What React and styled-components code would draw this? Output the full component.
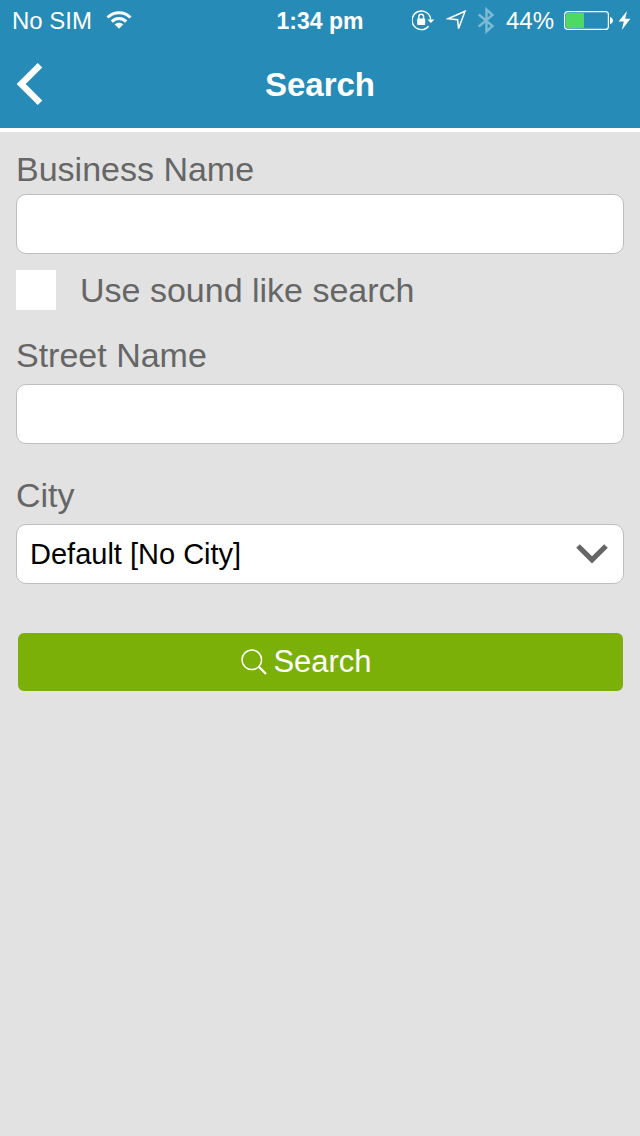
import React, { useState } from 'react';
import styled, { createGlobalStyle } from 'styled-components';

const GlobalStyle = createGlobalStyle`
  * {
    box-sizing: border-box;
  }

  body {
    margin: 0;
    background-color: #e2e2e2;
    font-family: 'Liberation Sans', Arial, sans-serif;
  }
`;

const Header = styled.header`
  background-color: #268cb7;
  color: #fff;
  border-bottom: 4px solid #fff;
`;

const StatusBar = styled.div`
  display: grid;
  grid-template-columns: 1fr auto 1fr;
  align-items: center;
  height: 40px;
  padding: 2px 8px 0;
  font-size: 24px;
  line-height: 38px;
`;

const StatusGroup = styled.div`
  display: flex;
  align-items: center;
  justify-content: ${(props) => (props.$end ? 'flex-end' : 'flex-start')};
  gap: ${(props) => (props.$end ? '10px' : '14px')};
  padding-left: 4px;
`;

const Time = styled.time`
  font-size: 23px;
  font-weight: 700;
`;

const StatusIcon = styled.svg`
  display: block;
  flex: none;
  opacity: ${(props) => (props.$dim ? 0.4 : 1)};
`;

const NavBar = styled.nav`
  display: grid;
  grid-template-columns: 1fr auto 1fr;
  align-items: center;
  height: 88px;
  padding: 0 16px;
`;

const BackButton = styled.button`
  justify-self: start;
  padding: 0;
  border: none;
  background: none;
  color: inherit;
  cursor: pointer;

  svg {
    display: block;
  }
`;

const Title = styled.h1`
  margin: 0;
  padding-top: 2px;
  font-size: 33px;
  line-height: 40px;
  font-weight: 700;
`;

const Form = styled.form`
  display: flex;
  flex-direction: column;
  padding: 17px 16px;
`;

const Field = styled.div`
  display: flex;
  flex-direction: column;
  gap: ${(props) => (props.$tight ? '5px' : '9px')};
  margin-bottom: ${(props) => props.$space}px;
`;

const Label = styled.label`
  font-size: 34px;
  line-height: 40px;
  color: #666;
`;

const TextInput = styled.input`
  width: 100%;
  height: 60px;
  padding: 0 13px;
  font-family: inherit;
  font-size: 29px;
  color: #000;
  background-color: #fff;
  border: 1px solid #bebebe;
  border-radius: 10px;
  outline: none;
`;

const CheckRow = styled.div`
  display: flex;
  align-items: center;
  gap: 24px;
  margin-bottom: 25px;
`;

const Checkbox = styled.input`
  appearance: none;
  width: 40px;
  height: 40px;
  margin: 0;
  background-color: #fff;
  cursor: pointer;

  &:checked {
    background-color: #7bb009;
    border: 8px solid #fff;
  }
`;

const SelectWrap = styled.div`
  position: relative;
`;

const Select = styled.select`
  appearance: none;
  display: block;
  width: 100%;
  height: 60px;
  padding: 0 56px 0 13px;
  font-family: inherit;
  font-size: 29px;
  color: #000;
  background-color: #fff;
  border: 1px solid #bebebe;
  border-radius: 10px;
  outline: none;
`;

const SelectArrow = styled.svg`
  position: absolute;
  top: 18px;
  right: 14px;
  pointer-events: none;
`;

const SearchButton = styled.button`
  display: flex;
  align-items: center;
  justify-content: center;
  gap: 6px;
  height: 58px;
  margin: 0 1px 0 2px;
  padding: 0 28px 0 0;
  font-family: inherit;
  font-size: 31px;
  color: #fff;
  background-color: #7bb009;
  border: none;
  border-radius: 6px;
  cursor: pointer;
`;

const WifiIcon = () => (
  <StatusIcon width="26" height="20" viewBox="0 1 26 20" fill="none" stroke="#fff" strokeWidth="3">
    <path d="M1.5 7.5C8 1.1 18 1.1 24.5 7.5" />
    <path d="M5.8 11.6C10 7.6 16 7.6 20.2 11.6" />
    <path d="M8.6 14.3C11.2 12.1 14.8 12.1 17.4 14.3L13 18.7Z" fill="#fff" stroke="none" />
  </StatusIcon>
);

const RotationLockIcon = () => (
  <StatusIcon width="24" height="24" viewBox="0 0 24 24" fill="none" stroke="#fff" strokeWidth="1.4">
    <path d="M16.6 17.2A9.3 9.3 0 1 1 18.7 10.6" />
    <path d="M15.4 10.4H22.4L18.9 14Z" fill="#fff" stroke="none" />
    <rect x="5.2" y="9.4" width="8" height="6.6" rx="0.8" fill="#fff" stroke="none" />
    <path d="M6.8 10V7.6a2.4 2.4 0 0 1 4.8 0V10" />
  </StatusIcon>
);

const LocationIcon = () => (
  <StatusIcon width="22" height="22" viewBox="0 0 22 22" fill="none" stroke="#fff" strokeWidth="1.5">
    <path d="M19 1.2L2 8.8L11.6 9.8L12.6 18.6Z" />
  </StatusIcon>
);

const BluetoothIcon = () => (
  <StatusIcon $dim width="18" height="28" viewBox="0 0 18 28" fill="none" stroke="#fff" strokeWidth="2.4">
    <path d="M0.8 7.5L14.5 19L8.5 24.5V2.5L14.5 8L0.8 19.5" />
  </StatusIcon>
);

const BatteryIcon = () => (
  <StatusIcon width="68" height="20" viewBox="0 0 68 20" fill="#fff">
    <rect x="0.6" y="0.6" width="43.8" height="17.8" rx="3" fill="none" stroke="#fff" strokeWidth="1.2" />
    <rect x="2" y="2" width="18" height="15" rx="1" fill="#4cd964" />
    <path d="M46 6C50 7 50 12 46 13Z" />
    <path d="M63 0L54.6 10.6H59.8L57.8 19L66.4 7.8H61.2Z" />
  </StatusIcon>
);

const App = () => {
  const [businessName, setBusinessName] = useState('');
  const [soundLike, setSoundLike] = useState(false);
  const [streetName, setStreetName] = useState('');
  const [city, setCity] = useState('default');

  const handleSubmit = (e) => {
    e.preventDefault();
    console.log('Search:', { businessName, soundLike, streetName, city });
  };

  return (
    <>
      <GlobalStyle />
      <Header>
        <StatusBar>
          <StatusGroup>
            <span>No SIM</span>
            <WifiIcon />
          </StatusGroup>
          <Time>1:34 pm</Time>
          <StatusGroup $end>
            <RotationLockIcon />
            <LocationIcon />
            <BluetoothIcon />
            <span>44%</span>
            <BatteryIcon />
          </StatusGroup>
        </StatusBar>
        <NavBar>
          <BackButton type="button" aria-label="Back">
            <svg width="28" height="44" viewBox="0 0 28 44" fill="none" stroke="#fff" strokeWidth="6.4">
              <path d="M24 3.2L5.2 22L24 40.8" strokeLinejoin="miter" />
            </svg>
          </BackButton>
          <Title>Search</Title>
        </NavBar>
      </Header>

      <Form onSubmit={handleSubmit}>
        <Field $tight $space={16}>
          <Label htmlFor="businessName">Business Name</Label>
          <TextInput
            id="businessName"
            value={businessName}
            onChange={(e) => setBusinessName(e.target.value)}
          />
        </Field>

        <CheckRow>
          <Checkbox
            id="soundLike"
            type="checkbox"
            checked={soundLike}
            onChange={(e) => setSoundLike(e.target.checked)}
          />
          <Label htmlFor="soundLike">Use sound like search</Label>
        </CheckRow>

        <Field $space={31}>
          <Label htmlFor="streetName">Street Name</Label>
          <TextInput
            id="streetName"
            value={streetName}
            onChange={(e) => setStreetName(e.target.value)}
          />
        </Field>

        <Field $space={49}>
          <Label htmlFor="city">City</Label>
          <SelectWrap>
            <Select id="city" value={city} onChange={(e) => setCity(e.target.value)}>
              <option value="default">Default [No City]</option>
            </Select>
            <SelectArrow width="36" height="24" viewBox="0 0 36 24" fill="none" stroke="#666" strokeWidth="5.2">
              <path d="M4 4L18 17.8L32 4" />
            </SelectArrow>
          </SelectWrap>
        </Field>

        <SearchButton type="submit">
          <svg width="26" height="26" viewBox="0 0 26 26" fill="none" stroke="#fff" strokeWidth="1.5">
            <circle cx="10.8" cy="10.8" r="9.8" />
            <path d="M17.8 17.8L25 25" strokeWidth="2.2" />
          </svg>
          Search
        </SearchButton>
      </Form>
    </>
  );
};

export default App;
